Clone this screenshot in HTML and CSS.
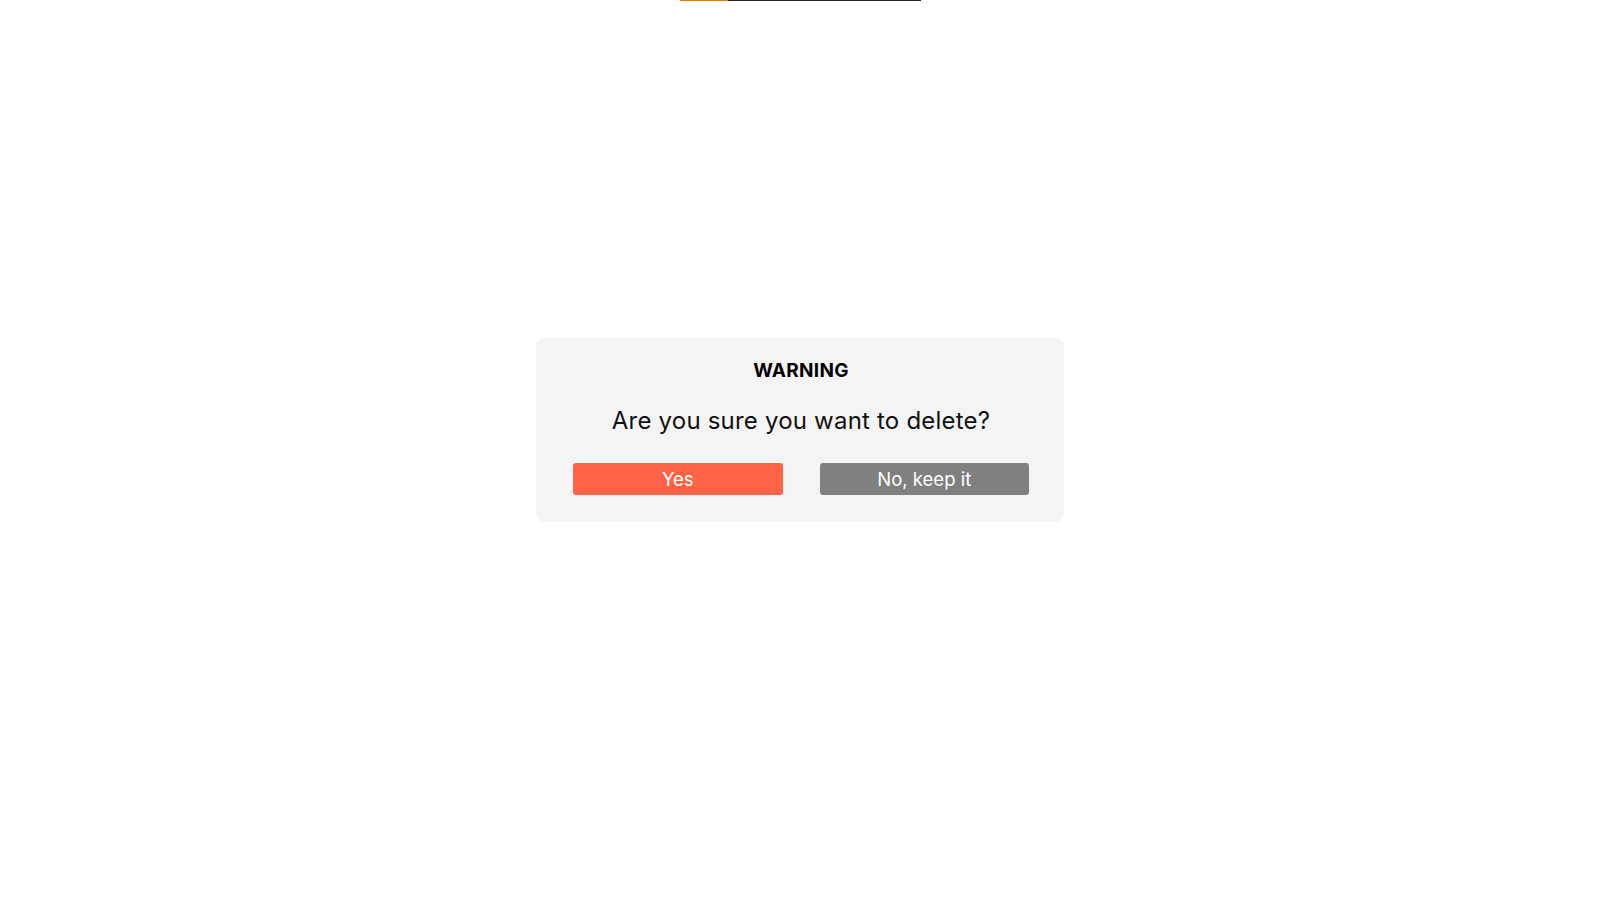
FILE: index.html
```html
<!DOCTYPE html>
<html lang="en">
<head>
<meta charset="utf-8">
<title>Warning</title>
<link rel="stylesheet" href="styles.css">
</head>
<body>
<div class="progress"><div class="progress-fill"></div></div>
<main class="stage">
  <section class="dialog">
    <h2 class="dialog-title">WARNING</h2>
    <p class="dialog-text">Are you sure you want to delete?</p>
    <div class="dialog-actions">
      <button class="btn btn-yes">Yes</button>
      <button class="btn btn-no">No, keep it</button>
    </div>
  </section>
</main>
</body>
</html>
```
FILE: styles.css
```css
html, body {
  margin: 0;
  padding: 0;
  background: #ffffff;
  font-family: "Inter", "Noto Sans", "Liberation Sans", sans-serif;
}
.progress {
  position: absolute;
  top: 0;
  left: 680px;
  width: 241px;
  height: 1px;
  background: #222222;
}
.progress-fill {
  width: 48px;
  height: 1px;
  background: #e07a1f;
}
.stage {
  display: flex;
  justify-content: center;
  padding-top: 338px;
}
.dialog {
  width: 528px;
  box-sizing: border-box;
  background: #f4f4f4;
  border-radius: 8px;
  padding: 21px 35px 27px 37px;
  text-align: center;
}
.dialog-title {
  margin: 0;
  font-size: 19px;
  line-height: 24px;
  font-weight: 700;
  letter-spacing: 0.3px;
  color: #000;
}
.dialog-text {
  margin: 23px 0 0;
  font-size: 24px;
  line-height: 30px;
  letter-spacing: 0.2px;
  color: #111;
}
.dialog-actions {
  display: flex;
  gap: 37px;
  margin-top: 27px;
}
.btn {
  flex: 1;
  height: 32px;
  border: none;
  border-radius: 3px;
  color: #ffffff;
  font-family: inherit;
  font-size: 18.5px;
  padding: 0;
  cursor: pointer;
}
.btn-yes { background: #ff6347; }
.btn-no { background: #808080; }
```
